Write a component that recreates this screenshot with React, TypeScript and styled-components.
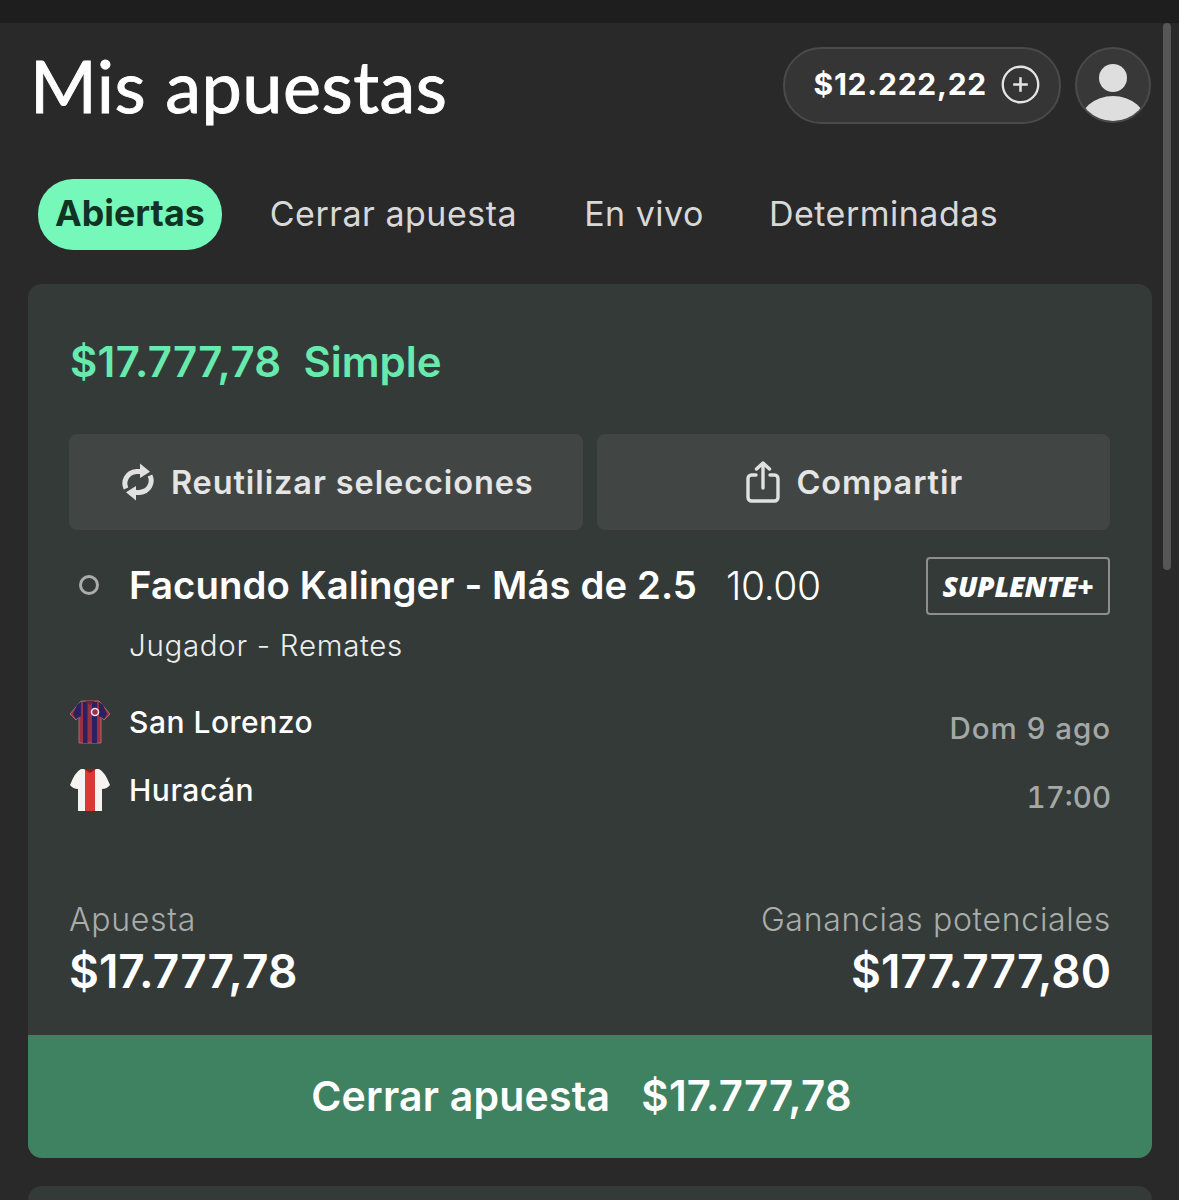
import * as React from 'react'
import styled, { createGlobalStyle } from 'styled-components'

const Global = createGlobalStyle`
  html, body {
    margin: 0;
    padding: 0;
    background: #292929;
  }
  body {
    font-family: Inter, "Noto Sans", "Liberation Sans", sans-serif;
    color: #fff;
    height: 1200px;
    overflow: hidden;
  }
`

const TopBar = styled.div`
  height: 23px;
  background: #1e1e1e;
`

const Page = styled.div`
  position: relative;
  padding: 24px 27px 0 28px;
`

const Scrollbar = styled.div`
  position: absolute;
  top: 0;
  right: 8px;
  width: 8px;
  height: 547px;
  border-radius: 4px;
  background: #565656;
`

const Header = styled.header`
  display: flex;
  align-items: center;
  justify-content: space-between;
  height: 76px;
`

const Title = styled.h1`
  margin: 0 0 0 2px;
  font-family: Lato, "Liberation Sans", sans-serif;
  font-weight: 400;
  font-size: 72px;
  line-height: 76px;
  letter-spacing: 0.5px;
  color: #fff;
  -webkit-text-stroke: 0.9px #fff;
`

const HeaderRight = styled.div`
  display: flex;
  align-items: center;
  gap: 14px;
  margin-right: 1px;
`

const Balance = styled.div`
  display: flex;
  align-items: center;
  justify-content: flex-end;
  box-sizing: border-box;
  width: 278px;
  height: 77px;
  padding: 0 19px 2px 0;
  gap: 14px;
  border: 2px solid #4a4a4a;
  border-radius: 38px;
  background: #353535;
  font-size: 30px;
  font-weight: 700;
  letter-spacing: 0.75px;
`

const Avatar = styled.div`
  box-sizing: border-box;
  width: 76px;
  height: 76px;
  border: 2px solid #4a4a4a;
  border-radius: 50%;
  background: #383838;
  overflow: hidden;
`

const Tabs = styled.nav`
  display: flex;
  align-items: center;
  margin: 56px 0 34px 10px;
`

const Tab = styled.div<{ $active?: boolean; $gap?: number }>`
  display: flex;
  align-items: center;
  box-sizing: border-box;
  height: 71px;
  padding: 0 ${(p) => (p.$active ? 17 : 0)}px 3px;
  margin-right: ${(p) => p.$gap || 0}px;
  border-radius: 35px;
  background: ${(p) => (p.$active ? '#75f8b9' : 'transparent')};
  color: ${(p) => (p.$active ? '#123324' : '#d8d8d8')};
  font-size: ${(p) => (p.$active ? 35.8 : 34)}px;
  font-weight: ${(p) => (p.$active ? 700 : 400)};
  letter-spacing: ${(p) => (p.$active ? 0 : 0.5)}px;
`

const Card = styled.section`
  height: 874px;
  display: flex;
  flex-direction: column;
  border-radius: 14px;
  background: #343a38;
  overflow: hidden;
`

const CardBody = styled.div`
  flex: 1;
  padding: 0 41px 0 41px;
`

const CardTitle = styled.div`
  display: flex;
  gap: 22px;
  height: 150px;
  padding: 55px 0 0 1px;
  box-sizing: border-box;
  color: #68eaae;
  font-size: 42px;
  line-height: 46px;
  font-weight: 600;
  letter-spacing: 0.3px;
`

const BetType = styled.span`
  letter-spacing: 0;
`

const ActionRow = styled.div`
  display: grid;
  grid-template-columns: 1fr 1fr;
  gap: 14px;
  margin-right: 1px;
`

const ActionButton = styled.div`
  display: flex;
  align-items: center;
  justify-content: center;
  gap: 16px;
  height: 96px;
  padding-left: 3px;
  border-radius: 8px;
  background: #414644;
  color: #e4e5e4;
  font-size: 32.5px;
  font-weight: 600;
  letter-spacing: 0.9px;
`

const Selection = styled.div`
  display: flex;
  align-items: center;
  height: 110px;
`

const Status = styled.span`
  box-sizing: border-box;
  width: 20px;
  height: 20px;
  margin: 0 30px 0 10px;
  border: 3px solid #a9adab;
  border-radius: 50%;
`

const SelectionName = styled.div`
  font-size: 38.3px;
  font-weight: 600;
  letter-spacing: 0.1px;
`

const Odds = styled.div`
  margin-left: 29px;
  font-size: 39px;
  font-weight: 300;
  letter-spacing: -0.4px;
`

const Badge = styled.div`
  display: flex;
  align-items: center;
  justify-content: center;
  box-sizing: border-box;
  width: 184px;
  height: 58px;
  margin: 2px 1px 0 auto;
  border: 2px solid #8b8f8d;
  border-radius: 4px;
  font-family: "Open Sans", sans-serif;
  font-size: 28.2px;
  font-style: italic;
  font-weight: 800;
  letter-spacing: -0.3px;
`

const Market = styled.div`
  margin: -14px 0 0 60px;
  font-size: 29.5px;
  line-height: 38px;
  font-weight: 300;
  letter-spacing: 0.7px;
  color: #eceeed;
`

const Match = styled.div`
  display: flex;
  justify-content: space-between;
  margin-top: 33px;
`

const Teams = styled.div`
  display: flex;
  flex-direction: column;
  gap: 18px;
`

const Team = styled.div`
  display: flex;
  align-items: center;
  gap: 18px;
  height: 50px;
  font-size: 30px;
  font-weight: 500;
  letter-spacing: 0.5px;
`

const MatchTime = styled.div`
  display: flex;
  flex-direction: column;
  align-items: flex-end;
  gap: 32px;
  padding-top: 13px;
  color: #a4a8a6;
  font-size: 29.5px;
  line-height: 37px;
  font-weight: 500;
  letter-spacing: 1px;
`

const KickOff = styled.span`
  letter-spacing: 0;
  font-variant-numeric: tabular-nums;
`

const Totals = styled.div`
  display: flex;
  justify-content: space-between;
  margin-top: 85px;
`

const TotalColumn = styled.div<{ $right?: boolean }>`
  text-align: ${(p) => (p.$right ? 'right' : 'left')};
`

const TotalLabel = styled.div`
  color: #a9adab;
  font-size: 32px;
  line-height: 38px;
  font-weight: 300;
  letter-spacing: 0.7px;
`

const TotalValue = styled.div`
  margin-top: 7px;
  font-size: 46px;
  line-height: 50px;
  font-weight: 600;
  letter-spacing: 0;
`

const CashOut = styled.div`
  display: flex;
  align-items: center;
  justify-content: center;
  gap: 31px;
  height: 123px;
  padding: 0 17px 2px 0;
  box-sizing: border-box;
  background: #3f8262;
  font-size: 42px;
  font-weight: 600;
  letter-spacing: 0.2px;
`

const CashLabel = styled.span`
  font-size: 41px;
`

const NextCard = styled.div`
  height: 40px;
  margin-top: 28px;
  border-radius: 14px 14px 0 0;
  background: #343a38;
`

const RefreshIcon = () => (
  <svg width="34" height="40" viewBox="0 0 34 40" fill="none">
    <path d="M5 26.5C1.8 19.5 5.5 10.5 15.5 9.6H21" stroke="#e0e1e0" strokeWidth="5" />
    <path d="M19 1.5L29 9.8 19 16Z" fill="#e0e1e0" />
    <path d="M29 13.5C32.2 20.5 28.5 29.5 18.5 30.4H13" stroke="#e0e1e0" strokeWidth="5" />
    <path d="M15 38.5L5 30.2 15 24Z" fill="#e0e1e0" />
  </svg>
)

const ShareIcon = () => (
  <svg width="34" height="42" viewBox="0 0 34 42" fill="none" stroke="#e0e1e0" strokeWidth="3.4" strokeLinecap="round" strokeLinejoin="round">
    <path d="M10 14H5.5A3.5 3.5 0 0 0 2 17.5V36.5A3.5 3.5 0 0 0 5.5 40H28.5A3.5 3.5 0 0 0 32 36.5V17.5A3.5 3.5 0 0 0 28.5 14H24" />
    <path d="M17 27V2M10.5 8L17 2 23.5 8" />
  </svg>
)

const PlusIcon = () => (
  <svg width="39" height="39" viewBox="0 0 40 40" fill="none" stroke="#e4e4e4">
    <circle cx="20" cy="20" r="18.2" strokeWidth="2.4" />
    <path d="M12.5 20H27.5M20 12.5V27.5" strokeWidth="2.6" />
  </svg>
)

const UserIcon = () => (
  <svg width="72" height="72" viewBox="0 0 72 72" fill="#dedede">
    <circle cx="36" cy="29" r="14" />
    <ellipse cx="36" cy="76" rx="34" ry="29" />
  </svg>
)

const RedBlueShirt = () => (
  <svg width="42" height="44" viewBox="0 0 42 44">
    <path d="M12 1H30L41 14 35 20 32 17V43H10V17L7 20 1 14Z" fill="#9b3043" stroke="#a56a74" strokeWidth="1" />
    <path d="M14 2H18.5V43H14ZM23 2H28V43H23ZM8 5L12 2V16L7 19 4 14Z" fill="#2c2160" />
    <path d="M34 5L30 2V16L35 19 38 14Z" fill="#2c2160" />
    <path d="M16 1H26L21 5Z" fill="#7a1f30" />
    <circle cx="26" cy="12" r="3.5" fill="#9b3043" stroke="#e7e3ea" strokeWidth="1.6" />
  </svg>
)

const WhiteRedShirt = () => (
  <svg width="42" height="44" viewBox="0 0 42 44">
    <path d="M12 1H30Q36 4 41 17Q38 21 33 21V43H9V21Q4 21 1 17Q6 4 12 1Z" fill="#f7f3f1" />
    <path d="M16 1H26V43H16Z" fill="#d83a36" />
    <path d="M15 1H27L21 5Z" fill="#8a1f20" />
  </svg>
)

export default function App() {
  return (
    <>
      <Global />
      <TopBar />
      <Page>
        <Scrollbar />
        <Header>
          <Title>Mis apuestas</Title>
          <HeaderRight>
            <Balance>
              $12.222,22
              <PlusIcon />
            </Balance>
            <Avatar>
              <UserIcon />
            </Avatar>
          </HeaderRight>
        </Header>
        <Tabs>
          <Tab $active $gap={48}>Abiertas</Tab>
          <Tab $gap={67}>Cerrar apuesta</Tab>
          <Tab $gap={65}>En vivo</Tab>
          <Tab>Determinadas</Tab>
        </Tabs>
        <Card>
          <CardBody>
            <CardTitle>
              <span>$17.777,78</span>
              <BetType>Simple</BetType>
            </CardTitle>
            <ActionRow>
              <ActionButton>
                <RefreshIcon />
                Reutilizar selecciones
              </ActionButton>
              <ActionButton>
                <ShareIcon />
                Compartir
              </ActionButton>
            </ActionRow>
            <Selection>
              <Status />
              <SelectionName>Facundo Kalinger - Más de 2.5</SelectionName>
              <Odds>10.00</Odds>
              <Badge>SUPLENTE+</Badge>
            </Selection>
            <Market>Jugador - Remates</Market>
            <Match>
              <Teams>
                <Team>
                  <RedBlueShirt />
                  San Lorenzo
                </Team>
                <Team>
                  <WhiteRedShirt />
                  Huracán
                </Team>
              </Teams>
              <MatchTime>
                <span>Dom 9 ago</span>
                <KickOff>17:00</KickOff>
              </MatchTime>
            </Match>
            <Totals>
              <TotalColumn>
                <TotalLabel>Apuesta</TotalLabel>
                <TotalValue>$17.777,78</TotalValue>
              </TotalColumn>
              <TotalColumn $right>
                <TotalLabel>Ganancias potenciales</TotalLabel>
                <TotalValue>$177.777,80</TotalValue>
              </TotalColumn>
            </Totals>
          </CardBody>
          <CashOut>
            <CashLabel>Cerrar apuesta</CashLabel>
            <span>$17.777,78</span>
          </CashOut>
        </Card>
        <NextCard />
      </Page>
    </>
  )
}
